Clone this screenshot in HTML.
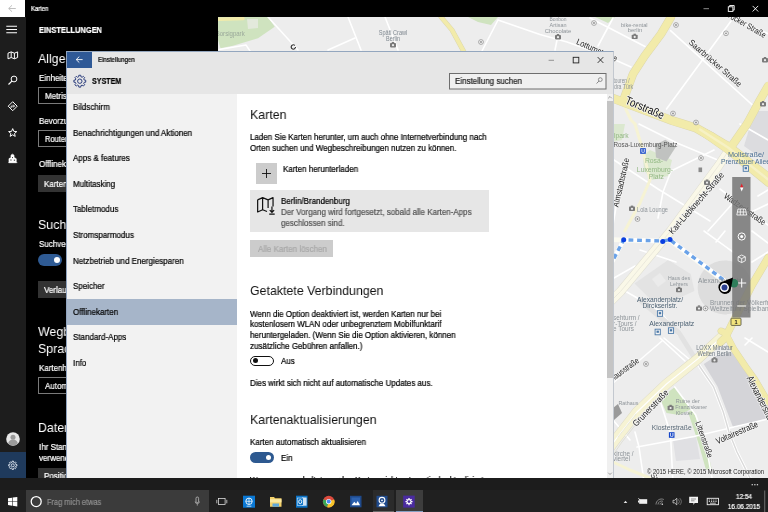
<!DOCTYPE html>
<html lang="de">
<head>
<meta charset="utf-8">
<title>Karten</title>
<style>
html,body{margin:0;padding:0;}
body{width:768px;height:512px;overflow:hidden;position:relative;background:#000;font-family:"Liberation Sans",sans-serif;color:#000;}
.abs{position:absolute;}
.t{position:absolute;white-space:nowrap;transform-origin:0 50%;will-change:transform;-webkit-text-stroke:0.22px currentColor;}
#ktitle{left:0;top:0;width:768px;height:17px;background:#000;}
#kback{left:0;top:0;width:25px;height:17px;background:#fff;}
#rail{left:0;top:17px;width:26px;height:461px;background:#1d1d1d;}
#kpane{left:26px;top:17px;width:192px;height:461px;background:#000;}
#map{left:218px;top:17px;width:550px;height:461px;background:#ececec;overflow:hidden;}
#appbar{left:0;top:478px;width:768px;height:12px;background:#1c1c1c;}
#taskbar{left:0;top:490px;width:768px;height:22px;background:#202020;}
.kw{color:#fff;}
.kbox{position:absolute;border:1px solid #7a7a7a;box-sizing:border-box;height:17px;}
.kbtn{position:absolute;background:#333;height:17px;}
#win{left:66px;top:51px;width:548px;height:427px;background:#fff;box-sizing:border-box;border-left:1px solid #8fa3bf;border-top:1px solid #93a6be;border-right:1px solid #c3c8cf;overflow:hidden;}
#whead{left:0;top:0;width:547px;height:42px;background:#e6e6e6;}
#wback{left:-1px;top:-1px;width:25.500px;height:17px;background:#2f5996;}
#nav{left:0;top:42px;width:170px;height:385px;background:#f2f2f2;}
#sel{left:0;top:246.800px;width:170px;height:26px;background:#a6b5c9;}
#content{left:170px;top:42px;width:370px;height:385px;background:#fff;}
#sb{left:539.500px;top:42px;width:7px;height:385px;background:#f0f0f0;}
#sbt{left:540px;top:48.500px;width:6.500px;height:277.800px;background:#c4c4c4;}
</style>
</head>
<body>
<div id="map" class="abs">
<svg class="abs" style="left:0;top:0;will-change:transform" width="550" height="461" viewBox="218 17 550 461" font-family="Liberation Sans, sans-serif">
<rect x="218" y="17" width="550" height="461" fill="#ededed"/>
<polygon points="218,17 268,17 274.7,26.7 258,38.3 233,45.8 220.5,48.3 218,40" fill="#cfe3bf" />
<polygon points="247,19 258,19 258,28 248,29" fill="#e3e9dc" />
<polygon points="468,17 498,17 491,25 478,22" fill="#cfe3bf" />
<polygon points="595,17 615,17 608,23" fill="#cfe3bf" />
<polygon points="643,156 650,150 672,160 668,176 652,180 644,170" fill="#dbe8cf" />
<polygon points="660,398.5 674.8,387 691.5,409 679,415 666.5,413" fill="#cfe3bf" />
<polygon points="688,412 693,410 706,445 712,470 706,470 699,445" fill="#cfe3bf" />
<polygon points="613,124 625,124 622,140 613,142" fill="#dbe8cf" />
<polygon points="703.8,364 716,356 733,352 745.8,369 768,404 768,418 733.4,428 727.2,412 717.5,386.6" fill="#d4d4d8" />
<polygon points="754.5,111 768,111 768,163 744,146" fill="#dcdcdf" />
<polygon points="655,145 665.4,139.7 675.8,147 666.5,161.6 656,157.4" fill="#c0c2c0" />
<polygon points="673,440 696,437 700,459 676,461" fill="#e0e0e3" />
<circle cx="724.700" cy="287.400" r="27" fill="#d6d6d6" opacity="0.700"/>
<polygon points="634.5,283.4 668.2,260 690.7,274 694.5,290.9 673.8,300.2 649.5,298.3" fill="#e3e3e3" />
<polygon points="652,279 660,273 666,281 658,287" fill="#ebebeb" />
<path d="M268 17 L298 50" stroke="#ffffff" stroke-width="1.6" fill="none" stroke-linejoin="round" stroke-linecap="round" />
<path d="M348 17 L361 50" stroke="#ffffff" stroke-width="1.6" fill="none" stroke-linejoin="round" stroke-linecap="round" />
<path d="M328 50 L355 38" stroke="#ffffff" stroke-width="1.6" fill="none" stroke-linejoin="round" stroke-linecap="round" />
<path d="M385 17 L398 50" stroke="#ffffff" stroke-width="1.6" fill="none" stroke-linejoin="round" stroke-linecap="round" />
<path d="M498 20 L481 53" stroke="#ffffff" stroke-width="1.6" fill="none" stroke-linejoin="round" stroke-linecap="round" />
<path d="M498 20 L540 34.5 L567 42 L612 58" stroke="#ffffff" stroke-width="1.6" fill="none" stroke-linejoin="round" stroke-linecap="round" />
<path d="M558 35 L555 50" stroke="#ffffff" stroke-width="1.6" fill="none" stroke-linejoin="round" stroke-linecap="round" />
<path d="M613 18 L598 46" stroke="#ffffff" stroke-width="1.6" fill="none" stroke-linejoin="round" stroke-linecap="round" />
<path d="M590 18 L645 46.5" stroke="#ffffff" stroke-width="1.6" fill="none" stroke-linejoin="round" stroke-linecap="round" />
<path d="M608 56.7 L631 67" stroke="#ffffff" stroke-width="1.6" fill="none" stroke-linejoin="round" stroke-linecap="round" />
<path d="M670.6 30.6 L752 104.7" stroke="#ffffff" stroke-width="1.6" fill="none" stroke-linejoin="round" stroke-linecap="round" />
<path d="M731 21 L666.5 109" stroke="#ffffff" stroke-width="1.6" fill="none" stroke-linejoin="round" stroke-linecap="round" />
<path d="M729 17 L768 33.7" stroke="#ffffff" stroke-width="1.6" fill="none" stroke-linejoin="round" stroke-linecap="round" />
<path d="M639 124 L677 143 L716.6 159.5" stroke="#ffffff" stroke-width="1.6" fill="none" stroke-linejoin="round" stroke-linecap="round" />
<path d="M614 160 L658 189 L710 221" stroke="#ffffff" stroke-width="1.6" fill="none" stroke-linejoin="round" stroke-linecap="round" />
<path d="M714 150 L671 171 L663 192 L658 218" stroke="#ffffff" stroke-width="1.6" fill="none" stroke-linejoin="round" stroke-linecap="round" />
<path d="M625 160 L616 207 L613 225" stroke="#ffffff" stroke-width="1.6" fill="none" stroke-linejoin="round" stroke-linecap="round" />
<path d="M716 166 L696 193" stroke="#ffffff" stroke-width="1.6" fill="none" stroke-linejoin="round" stroke-linecap="round" />
<path d="M720 189 L768 225" stroke="#ffffff" stroke-width="1.6" fill="none" stroke-linejoin="round" stroke-linecap="round" />
<path d="M708 231 L733 203" stroke="#ffffff" stroke-width="1.6" fill="none" stroke-linejoin="round" stroke-linecap="round" />
<path d="M740 124 L768 140" stroke="#ffffff" stroke-width="1.6" fill="none" stroke-linejoin="round" stroke-linecap="round" />
<path d="M758 196 L768 190" stroke="#ffffff" stroke-width="1.6" fill="none" stroke-linejoin="round" stroke-linecap="round" />
<path d="M745 215 L768 204" stroke="#ffffff" stroke-width="1.6" fill="none" stroke-linejoin="round" stroke-linecap="round" />
<path d="M625 291 L660 311 L679 336" stroke="#ffffff" stroke-width="1.6" fill="none" stroke-linejoin="round" stroke-linecap="round" />
<path d="M704 231 L733 252" stroke="#ffffff" stroke-width="1.6" fill="none" stroke-linejoin="round" stroke-linecap="round" />
<path d="M716 242 L725 231" stroke="#ffffff" stroke-width="1.6" fill="none" stroke-linejoin="round" stroke-linecap="round" />
<path d="M752 231 L768 243" stroke="#ffffff" stroke-width="1.6" fill="none" stroke-linejoin="round" stroke-linecap="round" />
<path d="M752 262 L768 252" stroke="#ffffff" stroke-width="1.6" fill="none" stroke-linejoin="round" stroke-linecap="round" />
<path d="M614 278 L635 266" stroke="#ffffff" stroke-width="1.6" fill="none" stroke-linejoin="round" stroke-linecap="round" />
<path d="M640 250 L676 262" stroke="#ffffff" stroke-width="1.6" fill="none" stroke-linejoin="round" stroke-linecap="round" />
<path d="M613 262 L623.7 240" stroke="#ffffff" stroke-width="1.6" fill="none" stroke-linejoin="round" stroke-linecap="round" />
<path d="M613 383 L662 341" stroke="#ffffff" stroke-width="1.6" fill="none" stroke-linejoin="round" stroke-linecap="round" />
<path d="M660 338 L685 361" stroke="#ffffff" stroke-width="1.6" fill="none" stroke-linejoin="round" stroke-linecap="round" />
<path d="M664 338 L689 359" stroke="#ffffff" stroke-width="1.6" fill="none" stroke-linejoin="round" stroke-linecap="round" />
<path d="M674.8 387 L695.7 415 L706 445 L712 478" stroke="#ffffff" stroke-width="1.6" fill="none" stroke-linejoin="round" stroke-linecap="round" />
<path d="M660 400.6 L670.6 434" stroke="#ffffff" stroke-width="1.6" fill="none" stroke-linejoin="round" stroke-linecap="round" />
<path d="M637 447 L694 436.5 L768 419" stroke="#ffffff" stroke-width="1.6" fill="none" stroke-linejoin="round" stroke-linecap="round" />
<path d="M670.6 436 L672.7 478" stroke="#ffffff" stroke-width="1.6" fill="none" stroke-linejoin="round" stroke-linecap="round" />
<path d="M635 432 L639 447 L643.5 478" stroke="#ffffff" stroke-width="1.6" fill="none" stroke-linejoin="round" stroke-linecap="round" />
<path d="M745 338 L768 352" stroke="#ffffff" stroke-width="1.6" fill="none" stroke-linejoin="round" stroke-linecap="round" />
<path d="M752 338 L745 345" stroke="#ffffff" stroke-width="1.6" fill="none" stroke-linejoin="round" stroke-linecap="round" />
<path d="M613 420 L630 440" stroke="#ffffff" stroke-width="1.6" fill="none" stroke-linejoin="round" stroke-linecap="round" />
<path d="M696 360 L700 367 L713.5 386.6 L723.3 412 L729 432 L737 452 L750 478" stroke="#ffffff" stroke-width="3.2" fill="none" stroke-linejoin="round" stroke-linecap="round" />
<path d="M696 360 L700 367 L713.5 386.6 L723.3 412 L729 432 L737 452 L750 478" stroke="#dadada" stroke-width="1.4" fill="none" stroke-linejoin="round" stroke-linecap="round" />
<path d="M640 300 L679 333 L696 360" stroke="#e2e2e2" stroke-width="5" fill="none" stroke-linejoin="round" stroke-linecap="round" />
<path d="M731 147 L718.6 165.7 L670.6 231 L620.5 291.5 L608 304" stroke="#deddd2" stroke-width="9.2" fill="none" stroke-linejoin="round" stroke-linecap="round" />
<path d="M731 147 L718.6 165.7 L670.6 231 L620.5 291.5 L608 304" stroke="#faf8e8" stroke-width="8.2" fill="none" stroke-linejoin="round" stroke-linecap="round" />
<path d="M731 147 L718.6 165.7 L670.6 231 L620.5 291.5 L608 304" stroke="#e9e7da" stroke-width="0.9" fill="none" stroke-linejoin="round" stroke-linecap="round" />
<path d="M635 124 L643 151 L650 180 L640 203 L624.7 231" stroke="#f6f3d4" stroke-width="3" fill="none" stroke-linejoin="round" stroke-linecap="round" />
<path d="M218 19.3 L243 18.6" stroke="#f2ebaa" stroke-width="3.4" fill="none" stroke-linejoin="round" stroke-linecap="round" />
<path d="M219 49.5 L246 45 L250 51" stroke="#ffffff" stroke-width="1.4" fill="none" stroke-linejoin="round" stroke-linecap="round" />
<path d="M621 99 L631 120 L635 124" stroke="#f6f3d4" stroke-width="3" fill="none" stroke-linejoin="round" stroke-linecap="round" />
<path d="M725 334 L697.8 358.9 L666.5 384 L637 412 L616 439 L608 450" stroke="#dedbc4" stroke-width="10.4" fill="none" stroke-linejoin="round" stroke-linecap="round" />
<path d="M725 334 L697.8 358.9 L666.5 384 L637 412 L616 439 L608 450" stroke="#f6f3d4" stroke-width="9.4" fill="none" stroke-linejoin="round" stroke-linecap="round" />
<path d="M725 334 L697.8 358.9 L666.5 384 L637 412 L616 439 L608 450" stroke="#ffffff" stroke-width="1.2" fill="none" stroke-linejoin="round" stroke-linecap="round" />
<path d="M640 419 L622 442 L613 455" stroke="#dcdccf" stroke-width="0.8" fill="none" stroke-linejoin="round" stroke-linecap="round" />
<path d="M636 414 L618 437" stroke="#dcdccf" stroke-width="0.6" fill="none" stroke-linejoin="round" stroke-linecap="round" />
<path d="M613 462 L630 470 L650 478" stroke="#f6f3d4" stroke-width="3" fill="none" stroke-linejoin="round" stroke-linecap="round" />
<path d="M441 17 L452 30 L464 52" stroke="#dcd7ac" stroke-width="4.9" fill="none" stroke-linejoin="round" stroke-linecap="round" />
<path d="M671 17 L661 34 L644.6 56 L633 74 L624.5 97" stroke="#dcd7ac" stroke-width="8.4" fill="none" stroke-linejoin="round" stroke-linecap="round" />
<path d="M606 95.7 L672 120.6 L696 128 L712 137" stroke="#dcd7ac" stroke-width="8.9" fill="none" stroke-linejoin="round" stroke-linecap="round" />
<path d="M696 127 L712 135 L730 145.5 L768 175" stroke="#dcd7ac" stroke-width="5.5" fill="none" stroke-linejoin="round" stroke-linecap="round" />
<path d="M696 129 L710 138.5 L727 150.5 L768 184" stroke="#dcd7ac" stroke-width="5.5" fill="none" stroke-linejoin="round" stroke-linecap="round" />
<path d="M768 86 L760 100 L747 124 L731 147" stroke="#dcd7ac" stroke-width="8.4" fill="none" stroke-linejoin="round" stroke-linecap="round" />
<path d="M768 258 L752 285 L725 338 L720.7 342" stroke="#dcd7ac" stroke-width="7.9" fill="none" stroke-linejoin="round" stroke-linecap="round" />
<path d="M721 331 L725.3 333 L734 349.5 L745.8 367 L754.5 379 L768 402" stroke="#dcd7ac" stroke-width="6.9" fill="none" stroke-linejoin="round" stroke-linecap="round" />
<path d="M441 17 L452 30 L464 52" stroke="#f2ebaa" stroke-width="4" fill="none" stroke-linejoin="round" stroke-linecap="round" />
<path d="M671 17 L661 34 L644.6 56 L633 74 L624.5 97" stroke="#f2ebaa" stroke-width="7.5" fill="none" stroke-linejoin="round" stroke-linecap="round" />
<path d="M606 95.7 L672 120.6 L696 128 L712 137" stroke="#f2ebaa" stroke-width="8" fill="none" stroke-linejoin="round" stroke-linecap="round" />
<path d="M696 127 L712 135 L730 145.5 L768 175" stroke="#f2ebaa" stroke-width="4.6" fill="none" stroke-linejoin="round" stroke-linecap="round" />
<path d="M696 129 L710 138.5 L727 150.5 L768 184" stroke="#f2ebaa" stroke-width="4.6" fill="none" stroke-linejoin="round" stroke-linecap="round" />
<path d="M768 86 L760 100 L747 124 L731 147" stroke="#f2ebaa" stroke-width="7.5" fill="none" stroke-linejoin="round" stroke-linecap="round" />
<path d="M768 258 L752 285 L725 338 L720.7 342" stroke="#f2ebaa" stroke-width="7" fill="none" stroke-linejoin="round" stroke-linecap="round" />
<path d="M721 331 L725.3 333 L734 349.5 L745.8 367 L754.5 379 L768 402" stroke="#f2ebaa" stroke-width="6" fill="none" stroke-linejoin="round" stroke-linecap="round" />
<path d="M700 129.5 L728 147.5 L768 179.5" stroke="#f6f1c4" stroke-width="2.6" fill="none" stroke-linejoin="round" stroke-linecap="round" />
<path d="M612 239.6 L663.5 241.3 L670 240" stroke="#fbfaf0" stroke-width="4.6" fill="none" stroke-linejoin="round" stroke-linecap="round" />
<path d="M670 241 L727 284" stroke="#fbfaf0" stroke-width="4" fill="none" stroke-linejoin="round" stroke-linecap="round" />
<path d="M623.7 240 L611 265" stroke="#fbfaf0" stroke-width="3.6" fill="none" stroke-linejoin="round" stroke-linecap="round" />
<path d="M610 266 L612 262 L623.7 239.8 L662.7 241 L670 239.8 L725 281" stroke="#ffffff" stroke-width="4.2" fill="none" stroke-linejoin="round" stroke-linecap="round" />
<path d="M610 266 L612 262 L623.7 239.8 L662.7 241 L670 239.8 L725 281" stroke="#6aa2e8" stroke-width="3.4" fill="none" stroke-linejoin="round" stroke-linecap="butt" stroke-dasharray="4.800 3.800"/>
<circle cx="623.7" cy="239.8" r="2.5" fill="#0a3fe0"/>
<circle cx="662.7" cy="241.4" r="2.5" fill="#0a3fe0"/>
<circle cx="670" cy="239.6" r="2.5" fill="#0a3fe0"/>
<text x="645" y="107.6" transform="rotate(23 645 107.6)" font-size="11.5" fill="#111" text-anchor="middle" dominant-baseline="central" textLength="41" lengthAdjust="spacingAndGlyphs"  stroke="#f4f4f4" stroke-width="1.6" paint-order="stroke" stroke-linejoin="round">Torstraße</text>
<text x="715.5" y="63" transform="rotate(41 715.5 63)" font-size="8.6" fill="#222" text-anchor="middle" dominant-baseline="central" textLength="67" lengthAdjust="spacingAndGlyphs"  stroke="#f4f4f4" stroke-width="1.6" paint-order="stroke" stroke-linejoin="round">Saarbrücker Straße</text>
<text x="739.5" y="20.5" transform="rotate(30 739.5 20.5)" font-size="8.6" fill="#222" text-anchor="middle" dominant-baseline="central" textLength="60" lengthAdjust="spacingAndGlyphs"  stroke="#f4f4f4" stroke-width="1.6" paint-order="stroke" stroke-linejoin="round">Saarbrücker Straße</text>
<text x="597" y="50" transform="rotate(24 597 50)" font-size="8.6" fill="#222" text-anchor="middle" dominant-baseline="central" textLength="44" lengthAdjust="spacingAndGlyphs"  stroke="#f4f4f4" stroke-width="1.6" paint-order="stroke" stroke-linejoin="round">Lottumstraße</text>
<text x="621" y="182.5" transform="rotate(-77 621 182.5)" font-size="8.6" fill="#222" text-anchor="middle" dominant-baseline="central" textLength="50" lengthAdjust="spacingAndGlyphs"  stroke="#f4f4f4" stroke-width="1.6" paint-order="stroke" stroke-linejoin="round">Almstadtstraße</text>
<text x="696.5" y="203" transform="rotate(-49 696.5 203)" font-size="8.8" fill="#222" text-anchor="middle" dominant-baseline="central" textLength="79" lengthAdjust="spacingAndGlyphs"  stroke="#f4f4f4" stroke-width="1.6" paint-order="stroke" stroke-linejoin="round">Karl-Liebknecht-Straße</text>
<text x="745" y="209" transform="rotate(35 745 209)" font-size="8.6" fill="#222" text-anchor="middle" dominant-baseline="central" textLength="49" lengthAdjust="spacingAndGlyphs"  stroke="#f4f4f4" stroke-width="1.6" paint-order="stroke" stroke-linejoin="round">Wadzeckstraße</text>
<text x="638" y="359.5" transform="rotate(-36 638 359.5)" font-size="8.6" fill="#222" text-anchor="end" dominant-baseline="central" textLength="43" lengthAdjust="spacingAndGlyphs"  stroke="#f4f4f4" stroke-width="1.6" paint-order="stroke" stroke-linejoin="round">Rathausstraße</text>
<text x="650.5" y="408" transform="rotate(-46 650.5 408)" font-size="8.8" fill="#222" text-anchor="middle" dominant-baseline="central" textLength="47" lengthAdjust="spacingAndGlyphs"  stroke="#f4f4f4" stroke-width="1.6" paint-order="stroke" stroke-linejoin="round">Grunerstraße</text>
<text x="704" y="439.5" transform="rotate(70.6 704 439.5)" font-size="8.2" fill="#222" text-anchor="middle" dominant-baseline="central" textLength="38" lengthAdjust="spacingAndGlyphs"  stroke="#f4f4f4" stroke-width="1.6" paint-order="stroke" stroke-linejoin="round">Littenstraße</text>
<text x="737" y="432.5" transform="rotate(-23.5 737 432.5)" font-size="8.8" fill="#222" text-anchor="middle" dominant-baseline="central" textLength="45" lengthAdjust="spacingAndGlyphs"  stroke="#f4f4f4" stroke-width="1.6" paint-order="stroke" stroke-linejoin="round">Voltairestraße</text>
<text x="749.5" y="376.5" transform="rotate(63 749.5 376.5)" font-size="10" fill="#222" text-anchor="start" dominant-baseline="central" textLength="56" lengthAdjust="spacingAndGlyphs"  stroke="#f4f4f4" stroke-width="1.6" paint-order="stroke" stroke-linejoin="round">Alexanderstraße</text>
<text x="652" y="473.5" transform="rotate(58 652 473.5)" font-size="8.2" fill="#222" text-anchor="start" dominant-baseline="central"  stroke="#f4f4f4" stroke-width="1.6" paint-order="stroke" stroke-linejoin="round">Stralauer Straße</text>
<text x="746" y="154" font-size="7.6" fill="#4b6f94" text-anchor="middle" dominant-baseline="central" textLength="36" lengthAdjust="spacingAndGlyphs">Mollstraße/</text>
<text x="745.5" y="161.8" font-size="7.6" fill="#4b6f94" text-anchor="middle" dominant-baseline="central" textLength="49" lengthAdjust="spacingAndGlyphs">Prenzlauer Allee</text>
<rect x="743.1999999999999" y="165.7" width="5.2" height="5.6" fill="#f4f4f4" stroke="#4a78a8" stroke-width="0.9"/><rect x="744.5999999999999" y="167.1" width="2.4" height="2.2" fill="#4a78a8"/>
<text x="645.5" y="144.5" font-size="7.4" fill="#555" text-anchor="middle" dominant-baseline="central" textLength="64" lengthAdjust="spacingAndGlyphs">Rosa-Luxemburg-Platz</text>
<rect x="640.2" y="148.2" width="5.6" height="5.6" fill="#1546c8"/><text x="643" y="151.2" font-size="5" font-weight="bold" fill="#fff" text-anchor="middle" dominant-baseline="central">U</text>
<text x="660" y="299" font-size="7.8" fill="#4b6072" text-anchor="middle" dominant-baseline="central" textLength="46" lengthAdjust="spacingAndGlyphs">Alexanderplatz/</text>
<text x="660" y="305.8" font-size="7.8" fill="#4b6072" text-anchor="middle" dominant-baseline="central" textLength="35" lengthAdjust="spacingAndGlyphs">Dircksenstr.</text>
<rect x="657.4" y="310.7" width="5.2" height="5.6" fill="#f4f4f4" stroke="#4a78a8" stroke-width="0.9"/><rect x="658.8" y="312.1" width="2.4" height="2.2" fill="#4a78a8"/>
<text x="671.7" y="323" font-size="7.8" fill="#4b6072" text-anchor="middle" dominant-baseline="central" textLength="45" lengthAdjust="spacingAndGlyphs">Alexanderplatz</text>
<rect x="655.1" y="329.2" width="5.2" height="5.6" fill="#f4f4f4" stroke="#4a78a8" stroke-width="0.9"/><rect x="656.5" y="330.6" width="2.4" height="2.2" fill="#4a78a8"/>
<rect x="668.4" y="327.8" width="5.2" height="5.6" fill="#f4f4f4" stroke="#4a78a8" stroke-width="0.9"/><rect x="669.8" y="329.20000000000005" width="2.4" height="2.2" fill="#4a78a8"/>
<text x="671.7" y="427.8" font-size="7.4" fill="#5a6a78" text-anchor="middle" dominant-baseline="central" textLength="40" lengthAdjust="spacingAndGlyphs">Klosterstraße</text>
<rect x="668.9000000000001" y="432.2" width="5.6" height="5.6" fill="#1546c8"/><text x="671.7" y="435.2" font-size="5" font-weight="bold" fill="#fff" text-anchor="middle" dominant-baseline="central">U</text>
<text x="654" y="160.5" font-size="6.8" fill="#93b884" text-anchor="middle" dominant-baseline="central">Rosa-</text>
<text x="655" y="169" font-size="6.8" fill="#93b884" text-anchor="middle" dominant-baseline="central">Luxemburg-</text>
<text x="656.4" y="176.8" font-size="6.8" fill="#93b884" text-anchor="middle" dominant-baseline="central">Platz</text>
<text x="614" y="135.5" font-size="6.8" fill="#93b884" text-anchor="start" dominant-baseline="central">lpark</text>
<text x="244.7" y="33.8" font-size="6.6" fill="#9aa89a" text-anchor="end" dominant-baseline="central" textLength="29" lengthAdjust="spacingAndGlyphs">Borsigpark</text>
<text x="393" y="32.5" font-size="6.8" fill="#7f8890" text-anchor="middle" dominant-baseline="central" textLength="28.5" lengthAdjust="spacingAndGlyphs">Späti Crawl</text>
<text x="393" y="38.6" font-size="6.8" fill="#7f8890" text-anchor="middle" dominant-baseline="central" textLength="14" lengthAdjust="spacingAndGlyphs">Berlin</text>
<g transform="translate(393 45)"><rect x="-3" y="-2" width="6" height="4.4" rx="0.8" fill="#7a7a7a"/><rect x="-1.2" y="-3" width="2.4" height="1.4" fill="#7a7a7a"/><circle r="1.1" cy="0.2" fill="#eee"/></g>
<text x="558" y="19" font-size="6" fill="#8e9499" text-anchor="middle" dominant-baseline="central" textLength="17" lengthAdjust="spacingAndGlyphs">Bonbon</text>
<text x="558" y="24.5" font-size="6" fill="#8e9499" text-anchor="middle" dominant-baseline="central" textLength="17" lengthAdjust="spacingAndGlyphs">Artisan</text>
<text x="558" y="30.5" font-size="6" fill="#8e9499" text-anchor="middle" dominant-baseline="central" textLength="26.5" lengthAdjust="spacingAndGlyphs">Chocolate</text>
<g transform="translate(558 37)"><rect x="-3" y="-2" width="6" height="4.4" rx="0.8" fill="#7a7a7a"/><rect x="-1.2" y="-3" width="2.4" height="1.4" fill="#7a7a7a"/><circle r="1.1" cy="0.2" fill="#eee"/></g>
<text x="634.3" y="25" font-size="6" fill="#8e9499" text-anchor="middle" dominant-baseline="central" textLength="26.7" lengthAdjust="spacingAndGlyphs">bike-rental</text>
<text x="635" y="30.2" font-size="6" fill="#8e9499" text-anchor="middle" dominant-baseline="central" textLength="14.6" lengthAdjust="spacingAndGlyphs">berlin</text>
<g transform="translate(634.7 36.7)"><rect x="-3" y="-2" width="6" height="4.4" rx="0.8" fill="#7a7a7a"/><rect x="-1.2" y="-3" width="2.4" height="1.4" fill="#7a7a7a"/><circle r="1.1" cy="0.2" fill="#eee"/></g>
<text x="613.5" y="80.5" font-size="6.4" fill="#8e9499" text-anchor="start" dominant-baseline="central" textLength="16" lengthAdjust="spacingAndGlyphs">touren /</text>
<text x="605" y="86.6" font-size="6.4" fill="#8e9499" text-anchor="start" dominant-baseline="central" textLength="28" lengthAdjust="spacingAndGlyphs">Sandra Türk</text>
<g transform="translate(632 208.6)"><rect x="-3" y="-2" width="6" height="4.4" rx="0.8" fill="#7a7a7a"/><rect x="-1.2" y="-3" width="2.4" height="1.4" fill="#7a7a7a"/><circle r="1.1" cy="0.2" fill="#eee"/></g>
<text x="637" y="209" font-size="6.6" fill="#8e9499" text-anchor="start" dominant-baseline="central" textLength="31" lengthAdjust="spacingAndGlyphs">Lola Lounge</text>
<g transform="translate(707 182.5)"><rect x="-3" y="-2" width="6" height="4.4" rx="0.8" fill="#7a7a7a"/><rect x="-1.2" y="-3" width="2.4" height="1.4" fill="#7a7a7a"/><circle r="1.1" cy="0.2" fill="#eee"/></g>
<circle cx="701" cy="158" r="2.4" fill="#f4f4f4" stroke="#8a8a8a" stroke-width="0.7"/><circle cx="701" cy="158" r="0.9" fill="#8a8a8a"/>
<rect x="698.5" y="167.500" width="3.6" height="4.600" fill="#8a8a8a"/>
<text x="679" y="277" font-size="6.2" fill="#8e9499" text-anchor="middle" dominant-baseline="central" textLength="22" lengthAdjust="spacingAndGlyphs">Haus des</text>
<text x="679" y="283" font-size="6.2" fill="#8e9499" text-anchor="middle" dominant-baseline="central" textLength="18" lengthAdjust="spacingAndGlyphs">Lehrers</text>
<g transform="translate(679 289.8)"><rect x="-3" y="-2" width="6" height="4.4" rx="0.8" fill="#7a7a7a"/><rect x="-1.2" y="-3" width="2.4" height="1.4" fill="#7a7a7a"/><circle r="1.1" cy="0.2" fill="#eee"/></g>
<text x="698" y="280.3" font-size="6.6" fill="#8e9499" text-anchor="start" dominant-baseline="central">Alexanderplatz</text>
<text x="710" y="302" font-size="6.4" fill="#8e9499" text-anchor="start" dominant-baseline="central">Brunnen der Völkerfreundschaft</text>
<text x="710" y="308.4" font-size="6.4" fill="#8e9499" text-anchor="start" dominant-baseline="central">Weltzeituhr Spielbank</text>
<g transform="translate(699 308.4)"><rect x="-3" y="-2" width="6" height="4.4" rx="0.8" fill="#7a7a7a"/><rect x="-1.2" y="-3" width="2.4" height="1.4" fill="#7a7a7a"/><circle r="1.1" cy="0.2" fill="#eee"/></g>
<circle cx="705.5" cy="308.4" r="2.4" fill="#f4f4f4" stroke="#8a8a8a" stroke-width="0.7"/><circle cx="705.5" cy="308.4" r="0.9" fill="#8a8a8a"/>
<text x="613" y="317.6" font-size="6.4" fill="#8e9499" text-anchor="start" dominant-baseline="central">sehturm /</text>
<text x="613" y="323.3" font-size="6.4" fill="#8e9499" text-anchor="start" dominant-baseline="central">r-Tours /</text>
<text x="613" y="328.8" font-size="6.4" fill="#8e9499" text-anchor="start" dominant-baseline="central">e Tours</text>
<text x="714.5" y="347.8" font-size="6.6" fill="#6d7780" text-anchor="middle" dominant-baseline="central" textLength="36.5" lengthAdjust="spacingAndGlyphs">LOXX Miniatur</text>
<text x="714.5" y="353.8" font-size="6.6" fill="#6d7780" text-anchor="middle" dominant-baseline="central" textLength="34" lengthAdjust="spacingAndGlyphs">Welten Berlin</text>
<g transform="translate(714.5 360.2)"><rect x="-3" y="-2" width="6" height="4.4" rx="0.8" fill="#7a7a7a"/><rect x="-1.2" y="-3" width="2.4" height="1.4" fill="#7a7a7a"/><circle r="1.1" cy="0.2" fill="#eee"/></g>
<text x="618.5" y="402.3" font-size="6.2" fill="#8e9499" text-anchor="start" dominant-baseline="central" textLength="19.8" lengthAdjust="spacingAndGlyphs">Rathaus</text>
<polygon points="613,408 618,404 622,413 614,420" fill="#9a9a9a" />
<text x="675.8" y="400.6" font-size="6.2" fill="#8e9499" text-anchor="start" dominant-baseline="central" textLength="24" lengthAdjust="spacingAndGlyphs">Ruine der</text>
<text x="675.2" y="406.6" font-size="6.2" fill="#8e9499" text-anchor="start" dominant-baseline="central" textLength="32" lengthAdjust="spacingAndGlyphs">Franziskaner</text>
<text x="675.8" y="412.3" font-size="6.2" fill="#8e9499" text-anchor="start" dominant-baseline="central" textLength="16.7" lengthAdjust="spacingAndGlyphs">Kloster</text>
<g transform="translate(670.6 407.8)"><rect x="-3" y="-2" width="6" height="4.4" rx="0.8" fill="#7a7a7a"/><rect x="-1.2" y="-3" width="2.4" height="1.4" fill="#7a7a7a"/><circle r="1.1" cy="0.2" fill="#eee"/></g>
<text x="613" y="453" font-size="6.4" fill="#8e9499" text-anchor="start" dominant-baseline="central">kirche /</text>
<text x="613" y="458.5" font-size="6.4" fill="#8e9499" text-anchor="start" dominant-baseline="central">viertel</text>
<circle cx="293.3" cy="47" r="2.2" fill="none" stroke="#111" stroke-width="1" stroke-dasharray="11 2.8"/>
<circle cx="481" cy="42" r="2.4" fill="#f4f4f4" stroke="#8a8a8a" stroke-width="0.7"/><circle cx="481" cy="42" r="0.9" fill="#8a8a8a"/>
<circle cx="594" cy="23" r="2.4" fill="#f4f4f4" stroke="#8a8a8a" stroke-width="0.7"/><circle cx="594" cy="23" r="0.9" fill="#8a8a8a"/>
<circle cx="676" cy="25" r="2.4" fill="#f4f4f4" stroke="#8a8a8a" stroke-width="0.7"/><circle cx="676" cy="25" r="0.9" fill="#8a8a8a"/>
<circle cx="726" cy="33.3" r="2.4" fill="#f4f4f4" stroke="#8a8a8a" stroke-width="0.7"/><circle cx="726" cy="33.3" r="0.9" fill="#8a8a8a"/>
<circle cx="673" cy="113.5" r="2.4" fill="#f4f4f4" stroke="#8a8a8a" stroke-width="0.7"/><circle cx="673" cy="113.5" r="0.9" fill="#8a8a8a"/>
<circle cx="696" cy="122.5" r="2.4" fill="#f4f4f4" stroke="#8a8a8a" stroke-width="0.7"/><circle cx="696" cy="122.5" r="0.9" fill="#8a8a8a"/>
<circle cx="637.5" cy="219" r="2.4" fill="#f4f4f4" stroke="#8a8a8a" stroke-width="0.7"/><circle cx="637.5" cy="219" r="0.9" fill="#8a8a8a"/>
<circle cx="646" cy="364" r="2.4" fill="#f4f4f4" stroke="#8a8a8a" stroke-width="0.7"/><circle cx="646" cy="364" r="0.9" fill="#8a8a8a"/>
<g transform="translate(765 60)"><rect x="-3" y="-2" width="6" height="4.4" rx="0.8" fill="#7a7a7a"/><rect x="-1.2" y="-3" width="2.4" height="1.4" fill="#7a7a7a"/><circle r="1.1" cy="0.2" fill="#eee"/></g>
<g transform="translate(763 104)"><rect x="-3" y="-2" width="6" height="4.4" rx="0.8" fill="#7a7a7a"/><rect x="-1.2" y="-3" width="2.4" height="1.4" fill="#7a7a7a"/><circle r="1.1" cy="0.2" fill="#eee"/></g>
<text x="764" y="471.8" font-size="7.6" fill="#222" text-anchor="end" dominant-baseline="central" textLength="117" lengthAdjust="spacingAndGlyphs" stroke="#f0f0f0" stroke-width="1.2" paint-order="stroke">© 2015 HERE, © 2015 Microsoft Corporation</text>
<rect x="731" y="318.200" width="10" height="7.200" rx="0.8" fill="#f2e47c" stroke="#4a4a3a" stroke-width="0.8"/><text x="736" y="322" font-size="5.6" font-weight="bold" fill="#222" text-anchor="middle" dominant-baseline="central">1</text>
<rect x="732.200" y="177" width="18.300" height="140.500" fill="#737373" opacity="0.840"/>
<path d="M741.700 183.500l1.700 4h-3.400z" fill="#e0202a"/><path d="M741.700 191.500l1.700-4h-3.400z" fill="#fff"/>
<g stroke="#fff" stroke-width="0.8" fill="none"><path d="M738 209h7.500l1.200 6h-9.900z"/><path d="M740.300 209v6M743.300 209v6M737.300 212h9"/></g>
<circle cx="741.700" cy="236.500" r="3.600" fill="none" stroke="#fff" stroke-width="1"/><circle cx="741.700" cy="236.500" r="1.500" fill="#fff"/>
<g stroke="#fff" stroke-width="0.8" fill="none"><path d="M741.700 255l3.600 1.800v4l-3.600 1.800-3.600-1.800v-4z"/><path d="M738.100 256.800l3.600 1.800 3.600-1.800M741.700 258.600v4"/></g>
<path d="M741.700 278.500v9M737.200 283h9" stroke="#fff" stroke-width="1" fill="none"/>
<path d="M737.200 306h9" stroke="#fff" stroke-width="1" fill="none"/>
<circle cx="734" cy="283.300" r="4.200" fill="#2e7d5b"/>
<path d="M733 277.500 L720.500 282.500 A6.600 6.600 0 1 0 730.500 291 Z" fill="#000"/>
<circle cx="724.500" cy="287.600" r="4.500" fill="#fff"/><circle cx="724.500" cy="287.600" r="3" fill="#2a3f8f"/>
</svg>
</div>
<div id="ktitle" class="abs"></div>
<div id="kback" class="abs"></div>
<div class="t kw" style="left:31px;top:2.5px;line-height:12px;font-size:6.8px;transform:scaleX(0.865);">Karten</div>
<svg class="abs" style="left:696px;top:0" width="72" height="17" viewBox="696 0 72 17" fill="none" stroke="#fff" stroke-width="0.9"><path d="M703.500 8.700h5.500" stroke="#9a9a9a"/><rect x="728.300" y="6.800" width="4.600" height="4.600"/><path d="M729.600 6.800v-1.300h4.600v4.600h-1.300"/><path d="M752.600 5.900l5.600 5.600M758.200 5.900l-5.600 5.600"/></svg>
<div id="rail" class="abs"></div>
<div id="kpane" class="abs"></div>
<div class="t kw" style="left:38.8px;top:24.0px;line-height:12px;font-size:8.6px;transform:scaleX(0.868);font-weight:bold;">EINSTELLUNGEN</div>
<div class="t kw" style="left:38px;top:50.0px;line-height:18px;font-size:13.6px;-webkit-text-stroke:0;transform:scaleX(0.91);">Allgemein</div>
<div class="t kw" style="left:38.5px;top:72.0px;line-height:12px;font-size:8.6px;transform:scaleX(0.93);">Einheiten</div>
<div class="kbox" style="left:38px;top:87px;width:120px;"></div>
<div class="t kw" style="left:45px;top:90.0px;line-height:12px;font-size:8.6px;transform:scaleX(0.93);">Metrisch</div>
<div class="t kw" style="left:38.5px;top:115.0px;line-height:12px;font-size:8.6px;transform:scaleX(0.93);">Bevorzugte Wegbeschreibungen</div>
<div class="kbox" style="left:38px;top:130px;width:120px;"></div>
<div class="t kw" style="left:45px;top:132.5px;line-height:12px;font-size:8.6px;transform:scaleX(0.87);">Routenplaner</div>
<div class="t kw" style="left:38.5px;top:158.0px;line-height:12px;font-size:8.6px;transform:scaleX(0.93);">Offlinekarten</div>
<div class="kbtn" style="left:38px;top:175px;width:150px;"></div>
<div class="t kw" style="left:44px;top:177.5px;line-height:12px;font-size:8.6px;transform:scaleX(0.93);">Karten herunterladen oder aktualisieren</div>
<div class="t kw" style="left:38px;top:216.0px;line-height:18px;font-size:13.6px;-webkit-text-stroke:0;transform:scaleX(0.91);">Suche</div>
<div class="t kw" style="left:38.5px;top:238.0px;line-height:12px;font-size:8.6px;transform:scaleX(0.93);">Suchverlauf</div>
<div class="abs" style="left:38px;top:254px;width:24px;height:12px;border-radius:6px;background:#2f5b94;"></div><div class="abs" style="left:54px;top:257px;width:6px;height:6px;border-radius:3px;background:#fff;"></div>
<div class="kbtn" style="left:38px;top:281px;width:70px;"></div>
<div class="t kw" style="left:44px;top:284.0px;line-height:12px;font-size:8.6px;transform:scaleX(0.93);">Verlauf löschen</div>
<div class="t kw" style="left:38px;top:323.0px;line-height:18px;font-size:13.6px;-webkit-text-stroke:0;transform:scaleX(0.91);">Wegbeschreibungen</div>
<div class="t kw" style="left:38px;top:339.5px;line-height:18px;font-size:13.6px;-webkit-text-stroke:0;transform:scaleX(0.91);">Sprache</div>
<div class="t kw" style="left:38.5px;top:362.0px;line-height:12px;font-size:8.6px;transform:scaleX(0.93);">Kartenhinweise</div>
<div class="kbox" style="left:38px;top:377px;width:120px;"></div>
<div class="t kw" style="left:45px;top:380.0px;line-height:12px;font-size:8.6px;transform:scaleX(0.93);">Automatisch</div>
<div class="t kw" style="left:38px;top:419.0px;line-height:18px;font-size:13.6px;-webkit-text-stroke:0;transform:scaleX(0.91);">Datenschutz</div>
<div class="t kw" style="left:38.5px;top:441.0px;line-height:12px;font-size:8.6px;transform:scaleX(0.93);">Ihr Standort wird</div>
<div class="t kw" style="left:38.5px;top:452.0px;line-height:12px;font-size:8.6px;transform:scaleX(0.93);">verwendet, um</div>
<div class="kbtn" style="left:38px;top:468px;width:90px;height:10px;"></div>
<div class="t kw" style="left:44px;top:470.0px;line-height:12px;font-size:8.6px;transform:scaleX(0.93);clip-path:inset(0 0 4px 0);">Positionseinstellungen</div>
<svg class="abs" style="left:0;top:0" width="26" height="478" viewBox="0 0 26 478" fill="none" stroke="#fff" stroke-width="1">
<path d="M15.500 5.500l-3.300 3.200 3.300 3.200M12.300 8.700h7" stroke="#b9b9b9" stroke-width="0.9" transform="translate(-3.500 -0.200)"/>
<path d="M6.300 26.300h10.700M6.300 29.500h10.700M6.300 32.700h10.700" stroke-width="1.100"/>
<path d="M8 53.200l3.200-1.300 3.200 1.300 3.200-1.300v5.600l-3.200 1.300-3.200-1.300-3.200 1.300zM11.200 51.900v5.600M14.400 53.200v5.600" stroke-width="1" stroke-linejoin="round"/>
<circle cx="14" cy="79" r="2.900" stroke-width="1"/><path d="M11.900 81.100l-3.400 3.400" stroke-width="1.200"/>
<path d="M12.700 101.700l4.500 4.500-4.500 4.500-4.500-4.500z" stroke-width="1"/><path d="M11.100 108v-1.900h3M13.200 104.700l1.400 1.400-1.400 1.400" stroke-width="0.900"/>
<path d="M12.70 128.60 L13.82 131.36 L16.79 131.57 L14.51 133.49 L15.23 136.38 L12.70 134.80 L10.17 136.38 L10.89 133.49 L8.61 131.57 L11.58 131.36Z" stroke-width="1" stroke-linejoin="miter"/>
<path d="M8.300 162.600h9M9 162.600v-4l2-.8v-2.600l1.400-1 1.600 1v2.300l2.200 1.200v3.900z" fill="#fff" stroke-width="0.700" stroke-linejoin="round"/><path d="M10.300 160h1.300M13.800 160.200h1.300M12 157.600h1" stroke="#1d1d1d" stroke-width="0.900"/>
</svg>
<div class="abs" style="left:0;top:452px;width:26px;height:26px;background:#1f3a5c;"></div>
<svg class="abs" style="left:0;top:425px" width="26" height="53" viewBox="0 0 26 53">
<circle cx="13" cy="14" r="6.800" fill="#e8e8e8"/><circle cx="13" cy="12.200" r="2.500" fill="#9a9a9a"/><path d="M8.200 18.600a4.800 4.200 0 0 1 9.600 0a6.800 6.800 0 0 1-9.600 0z" fill="#9a9a9a"/>
<g transform="translate(12.800 40.300)" fill="none" stroke="#dfe6f0" stroke-width="0.900" stroke-linejoin="round"><circle r="1.500"/><path d="M-0.75 -3.01 L-0.69 -4.14 L0.69 -4.14 L0.75 -3.01 L1.60 -2.66 L2.44 -3.42 L3.42 -2.44 L2.66 -1.60 L3.01 -0.75 L4.14 -0.69 L4.14 0.69 L3.01 0.75 L2.66 1.60 L3.42 2.44 L2.44 3.42 L1.60 2.66 L0.75 3.01 L0.69 4.14 L-0.69 4.14 L-0.75 3.01 L-1.60 2.66 L-2.44 3.42 L-3.42 2.44 L-2.66 1.60 L-3.01 0.75 L-4.14 0.69 L-4.14 -0.69 L-3.01 -0.75 L-2.66 -1.60 L-3.42 -2.44 L-2.44 -3.42 L-1.60 -2.66Z"/></g>
</svg>
<div id="appbar" class="abs"></div>
<div id="taskbar" class="abs"></div>
<div class="abs" style="left:25.500px;top:490px;width:183px;height:22px;background:#3b3b3b;"></div>
<div class="abs" style="left:372.500px;top:490px;width:21px;height:22px;background:#2b2b2b;"></div>
<div class="abs" style="left:372.500px;top:510.800px;width:21px;height:1.200px;background:#6a6a6a;"></div>
<div class="abs" style="left:396px;top:490px;width:26.500px;height:22px;background:#3d3d3d;"></div>
<div class="abs" style="left:396px;top:510.800px;width:26.500px;height:1.200px;background:#86a0c4;"></div>
<svg class="abs" style="left:0;top:478px" width="768" height="34" viewBox="0 478 768 34">
<!-- start -->
<path d="M8 498.300l4-.6v3.700h-4zM12.600 497.600l4.700-.7v4.500h-4.700zM8 502h4v3.700l-4-.6zM12.600 502h4.700v4.500l-4.700-.7z" fill="#fff"/>
<circle cx="36.200" cy="501.600" r="5" fill="none" stroke="#fff" stroke-width="1.300"/>
<!-- mic -->
<rect x="196" y="497" width="2.600" height="5.600" rx="1.300" fill="none" stroke="#bdbdbd" stroke-width="0.800"/><path d="M195.200 501.500a2.100 2.100 0 0 0 4.200 0M197.300 503.600v2" fill="none" stroke="#bdbdbd" stroke-width="0.700"/>
<!-- task view -->
<rect x="218.500" y="498.600" width="6.600" height="5.800" fill="none" stroke="#e6e6e6" stroke-width="0.750"/><path d="M216.800 499.800v3.500M226.800 499.800v3.500" stroke="#e6e6e6" stroke-width="0.750" fill="none"/>
<!-- IE/edge-like -->
<rect x="243" y="495.700" width="12" height="12" fill="#0a78d4"/><circle cx="249" cy="501.300" r="3.200" fill="none" stroke="#fff" stroke-width="0.900"/><path d="M245.800 501.300h6.400M249 498.100v6.400M246.600 506.200h4.800" stroke="#fff" stroke-width="0.700" fill="none"/>
<!-- explorer -->
<path d="M270 497h4l1 1.200h6.500v8.500h-11.500z" fill="#f3d16a"/><rect x="270" y="499.200" width="11.500" height="3.200" fill="#fbe9a2"/><rect x="272.500" y="503.500" width="6.500" height="3.200" fill="#5fa8dc"/>
<!-- outlook -->
<rect x="296" y="495.700" width="11.500" height="12" fill="#0a72c6"/><rect x="302" y="497.500" width="4.600" height="8.200" fill="#cfe3f5"/><rect x="297.200" y="498" width="6" height="7.400" fill="#0a72c6" stroke="#fff" stroke-width="0.500"/><ellipse cx="300.200" cy="501.700" rx="1.500" ry="2" fill="none" stroke="#fff" stroke-width="0.900"/>
<!-- chrome -->
<circle cx="328.700" cy="501.600" r="5.800" fill="#dd4b3e"/><path d="M328.700 501.600L323.400 499.300A5.800 5.800 0 0 0 327.200 507.200z" fill="#3aa757"/><path d="M328.700 501.600L327.200 507.200A5.800 5.800 0 0 0 334.200 499.500z" fill="#f6c42a"/><circle cx="328.700" cy="501.600" r="2.700" fill="#fff"/><circle cx="328.700" cy="501.600" r="2" fill="#4a8af4"/>
<!-- photos -->
<rect x="350" y="495.800" width="11.500" height="11.500" fill="#1f4a8c"/><rect x="351.500" y="497.500" width="8.500" height="7.800" fill="#2d62b0"/><path d="M351.500 505.300l2.800-3.600 1.800 2 1.600-2.600 2.300 4.200z" fill="#fff"/>
<!-- camera/maps -->
<rect x="376.500" y="495.800" width="11" height="11.500" fill="#1f4a8c"/><circle cx="382" cy="500.300" r="2.900" fill="none" stroke="#fff" stroke-width="1.100"/><circle cx="382" cy="500.300" r="0.900" fill="#fff"/><path d="M378.500 506.200h7l-1.500-2.500h-4z" fill="#fff"/>
<!-- settings -->
<rect x="403.200" y="495.600" width="11.500" height="12" fill="#4a2ba0"/>
<g transform="translate(409 501.600)" fill="#fff"><path d="M-0.68 -2.41 L-0.63 -3.54 L0.63 -3.54 L0.68 -2.41 L1.22 -2.18 L2.06 -2.95 L2.95 -2.06 L2.18 -1.22 L2.41 -0.68 L3.54 -0.63 L3.54 0.63 L2.41 0.68 L2.18 1.22 L2.95 2.06 L2.06 2.95 L1.22 2.18 L0.68 2.41 L0.63 3.54 L-0.63 3.54 L-0.68 2.41 L-1.22 2.18 L-2.06 2.95 L-2.95 2.06 L-2.18 1.22 L-2.41 0.68 L-3.54 0.63 L-3.54 -0.63 L-2.41 -0.68 L-2.18 -1.22 L-2.95 -2.06 L-2.06 -2.95 L-1.22 -2.18Z"/><circle r="1.400" fill="#4a2ba0"/></g>
<!-- tray -->
<path d="M623.700 503l1.800-2.300 1.800 2.300z" fill="#e8e8e8"/>
<rect x="639.200" y="499.200" width="8" height="4.600" fill="#f0f0f0"/><rect x="638" y="500.500" width="1.400" height="2" fill="#f0f0f0"/><path d="M638.200 498.400l2.200 1.600" stroke="#f0f0f0" stroke-width="0.800"/>
<g fill="none" stroke="#9a9a9a" stroke-width="0.800"><path d="M656 504.500a5.500 5.500 0 0 1 7.800-5"/><path d="M658 504.500a3.600 3.600 0 0 1 5-3.200"/><path d="M660 504.500a1.700 1.700 0 0 1 2.400-1.500"/></g><circle cx="662.300" cy="504.300" r="0.800" fill="#ddd"/>
<path d="M673 500.300h1.600l2.200-2v6.600l-2.200-2h-1.600z" fill="none" stroke="#e8e8e8" stroke-width="0.700"/><path d="M678.300 499.300a3.200 3.200 0 0 1 0 4.600M679.800 498.200a5 5 0 0 1 0 6.800" fill="none" stroke="#8a8a8a" stroke-width="0.700"/>
<path d="M689.200 496.800h8.800v6.200h-3.300l-1.300 1.900v-1.900h-4.200z" fill="#f4f4f4"/><path d="M691 499h5M691 500.800h3.500" stroke="#333" stroke-width="0.500"/>
<rect x="707.200" y="498.300" width="11.300" height="6.400" fill="none" stroke="#f0f0f0" stroke-width="0.900"/><path d="M708.800 500h1.200M711 500h1.200M713.200 500h1.200M715.400 500h1.200M708.800 501.500h1.200M711 501.500h1.200M713.200 501.500h1.200M715.400 501.500h1.200M710 503.200h5.800" stroke="#f0f0f0" stroke-width="0.800"/>
<path d="M751.600 484.800h1.300M754.200 484.800h1.300M756.800 484.800h1.300" stroke="#fff" stroke-width="1.100"/>
<rect x="764.300" y="490.500" width="0.900" height="21.500" fill="#777"/>
</svg>
<div class="t" style="left:46.900px;top:496px;line-height:12px;font-size:8.600px;color:#8e8e8e;transform:scaleX(0.860);">Frag mich etwas</div>
<div class="t" style="left:724px;top:491px;width:40px;text-align:center;line-height:12px;font-size:7px;color:#fff;transform-origin:50% 50%;transform:scaleX(0.920);">12:54</div>
<div class="t" style="left:723.600px;top:501.300px;width:40px;text-align:center;line-height:12px;font-size:7px;color:#fff;transform-origin:50% 50%;transform:scaleX(0.920);">16.06.2015</div>
<div id="win" class="abs">
<div id="whead" class="abs"></div>
<div id="wback" class="abs"></div>
<div class="t " style="left:31px;top:2.0px;line-height:12px;font-size:6.8px;transform:scaleX(0.9);">Einstellungen</div>
<div class="t " style="left:25px;top:23.0px;line-height:12px;font-size:8.8px;transform:scaleX(0.81);font-weight:bold;">SYSTEM</div>
<div id="nav" class="abs"></div>
<div id="sel" class="abs"></div>
<div id="content" class="abs"></div>
<div class="t " style="left:6px;top:49.0px;line-height:12px;font-size:8.6px;transform:scaleX(0.93);">Bildschirm</div>
<div class="t " style="left:6px;top:74.6px;line-height:12px;font-size:8.6px;transform:scaleX(0.93);">Benachrichtigungen und Aktionen</div>
<div class="t " style="left:6px;top:100.2px;line-height:12px;font-size:8.6px;transform:scaleX(0.93);">Apps &amp; features</div>
<div class="t " style="left:6px;top:125.8px;line-height:12px;font-size:8.6px;transform:scaleX(0.93);">Multitasking</div>
<div class="t " style="left:6px;top:151.4px;line-height:12px;font-size:8.6px;transform:scaleX(0.93);">Tabletmodus</div>
<div class="t " style="left:6px;top:177.0px;line-height:12px;font-size:8.6px;transform:scaleX(0.93);">Stromsparmodus</div>
<div class="t " style="left:6px;top:202.6px;line-height:12px;font-size:8.6px;transform:scaleX(0.93);">Netzbetrieb und Energiesparen</div>
<div class="t " style="left:6px;top:228.2px;line-height:12px;font-size:8.6px;transform:scaleX(0.93);">Speicher</div>
<div class="t " style="left:6px;top:253.8px;line-height:12px;font-size:8.6px;transform:scaleX(0.93);">Offlinekarten</div>
<div class="t " style="left:6px;top:279.4px;line-height:12px;font-size:8.6px;transform:scaleX(0.93);">Standard-Apps</div>
<div class="t " style="left:6px;top:305.0px;line-height:12px;font-size:8.6px;transform:scaleX(0.93);">Info</div>
<div class="t " style="left:183px;top:54.0px;line-height:18px;font-size:13.6px;color:#111;-webkit-text-stroke:0;transform:scaleX(0.91);">Karten</div>
<div class="t " style="left:183px;top:79.0px;line-height:12px;font-size:8.6px;transform:scaleX(0.93);">Laden Sie Karten herunter, um auch ohne Internetverbindung nach</div>
<div class="t " style="left:183px;top:90.0px;line-height:12px;font-size:8.6px;transform:scaleX(0.93);">Orten suchen und Wegbeschreibungen nutzen zu können.</div>
<div class="abs" style="left:189px;top:111px;width:21px;height:21px;background:#ccc;"></div>
<svg class="abs" style="left:189px;top:111px" width="21" height="21" viewBox="0 0 21 21"><path d="M10.5 6v9M6 10.5h9" stroke="#111" stroke-width="0.9" fill="none"/></svg>
<div class="t " style="left:216px;top:110.5px;line-height:12px;font-size:8.6px;transform:scaleX(0.93);">Karten herunterladen</div>
<div class="abs" style="left:183px;top:137.7px;width:239px;height:42px;background:#e6e6e6;"></div>
<svg class="abs" style="left:189px;top:144px" width="22" height="22" viewBox="0 0 20 20"><path d="M1.5 3.5l4.5-2 5 2 4.5-2v8M11 3.500v7.500M6 1.500v11M1.500 3.500v11l4.500-2 4 1.600" stroke="#111" stroke-width="1.1" fill="none" stroke-linejoin="round"/><path d="M14.500 9.500v5M12.500 12.800l2 2 2-2M12 16.500h5" stroke="#111" stroke-width="1.100" fill="none"/></svg>
<div class="t " style="left:214px;top:142.5px;line-height:12px;font-size:8.6px;transform:scaleX(0.93);">Berlin/Brandenburg</div>
<div class="t " style="left:214px;top:153.5px;line-height:12px;font-size:8.6px;color:#555;transform:scaleX(0.93);">Der Vorgang wird fortgesetzt, sobald alle Karten-Apps</div>
<div class="t " style="left:214px;top:164.5px;line-height:12px;font-size:8.6px;color:#555;transform:scaleX(0.93);">geschlossen sind.</div>
<div class="abs" style="left:183px;top:188px;width:83px;height:17px;background:#ccc;"></div>
<div class="t " style="left:191px;top:190.5px;line-height:12px;font-size:8.6px;color:#a8a8a8;transform:scaleX(0.93);">Alle Karten löschen</div>
<div class="t " style="left:183px;top:229.6px;line-height:18px;font-size:13.6px;color:#111;-webkit-text-stroke:0;transform:scaleX(0.91);">Getaktete Verbindungen</div>
<div class="t " style="left:183px;top:255.7px;line-height:12px;font-size:8.6px;transform:scaleX(0.93);">Wenn die Option deaktiviert ist, werden Karten nur bei</div>
<div class="t " style="left:183px;top:266.3px;line-height:12px;font-size:8.6px;transform:scaleX(0.93);">kostenlosem WLAN oder unbegrenztem Mobilfunktarif</div>
<div class="t " style="left:183px;top:276.8px;line-height:12px;font-size:8.6px;transform:scaleX(0.93);">heruntergeladen. (Wenn Sie die Option aktivieren, können</div>
<div class="t " style="left:183px;top:287.5px;line-height:12px;font-size:8.6px;transform:scaleX(0.93);">zusätzliche Gebühren anfallen.)</div>
<div class="abs" style="left:183px;top:303.5px;width:24px;height:10.6px;border-radius:5.5px;border:1px solid #111;box-sizing:border-box;"></div><div class="abs" style="left:186px;top:306.3px;width:5px;height:5px;border-radius:3px;background:#111;"></div>
<div class="t " style="left:214px;top:303.0px;line-height:12px;font-size:8.6px;transform:scaleX(0.93);">Aus</div>
<div class="t " style="left:183px;top:325.0px;line-height:12px;font-size:8.6px;transform:scaleX(0.93);">Dies wirkt sich nicht auf automatische Updates aus.</div>
<div class="t " style="left:183px;top:358.6px;line-height:18px;font-size:13.6px;color:#111;-webkit-text-stroke:0;transform:scaleX(0.91);">Kartenaktualisierungen</div>
<div class="t " style="left:183px;top:384.0px;line-height:12px;font-size:8.6px;transform:scaleX(0.93);">Karten automatisch aktualisieren</div>
<div class="abs" style="left:183px;top:400.4px;width:24px;height:10.8px;border-radius:5.5px;background:#2d5990;"></div><div class="abs" style="left:199px;top:403.3px;width:5px;height:5px;border-radius:3px;background:#fff;"></div>
<div class="t " style="left:214px;top:400.0px;line-height:12px;font-size:8.6px;transform:scaleX(0.93);">Ein</div>
<div class="t " style="left:183px;top:422.4px;line-height:12px;font-size:8.6px;transform:scaleX(0.93);">Wenn ausgeschaltet, werden Karten nicht automatisch aktualisiert.</div>
<div id="sb" class="abs"></div>
<div id="sbt" class="abs"></div>
<svg class="abs" style="left:0;top:0" width="547" height="44" viewBox="67 52 547 44" fill="none">
<path d="M79.300 56.600l-3.100 3 3.100 3M76.300 59.600h6.300" stroke="#fff" stroke-width="0.900"/>
<g transform="translate(79.800 81.200)" stroke="#2a3c7c" stroke-width="1" stroke-linejoin="round"><circle r="2.200"/><path d="M-1.11 -4.46 L-0.99 -5.92 L0.99 -5.92 L1.11 -4.46 L2.37 -3.94 L3.49 -4.88 L4.88 -3.49 L3.94 -2.37 L4.46 -1.11 L5.92 -0.99 L5.92 0.99 L4.46 1.11 L3.94 2.37 L4.88 3.49 L3.49 4.88 L2.37 3.94 L1.11 4.46 L0.99 5.92 L-0.99 5.92 L-1.11 4.46 L-2.37 3.94 L-3.49 4.88 L-4.88 3.49 L-3.94 2.37 L-4.46 1.11 L-5.92 0.99 L-5.92 -0.99 L-4.46 -1.11 L-3.94 -2.37 L-4.88 -3.49 L-3.49 -4.88 L-2.37 -3.94Z"/></g>
<path d="M548.600 60.300h5.400" stroke="#8a8a8a" stroke-width="0.900"/>
<rect x="573.200" y="57.300" width="5.600" height="5.600" stroke="#222" stroke-width="0.900"/>
<path d="M597.700 57.100l5.600 5.800M603.300 57.100l-5.600 5.800" stroke="#222" stroke-width="0.900"/>
<rect x="449.500" y="73.500" width="156.500" height="15.500" fill="#f0f0f0" stroke="#6e6e6e" stroke-width="1"/>
<circle cx="600.300" cy="79.600" r="1.900" stroke="#777" stroke-width="0.800"/><path d="M598.900 81.100l-2.300 2.400" stroke="#777" stroke-width="0.900"/>
</svg>
<div class="t" style="left:388px;top:23.0px;line-height:12px;font-size:8.6px;color:#222;transform:scaleX(0.93);">Einstellung suchen</div>
<svg class="abs" style="left:539px;top:43px" width="8" height="384" viewBox="606 95 8 384" fill="none" stroke="#8a8a8a" stroke-width="0.800">
<path d="M608.200 98.300l1.800-1.800 1.800 1.800"/>
<path d="M608.200 472.700l1.800 1.800 1.800-1.800"/>
</svg>
</div>
</body>
</html>
